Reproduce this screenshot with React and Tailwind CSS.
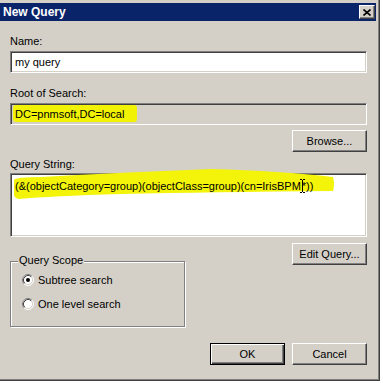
export default function App() {
  const raised =
    "border border-t-white border-l-white border-r-[#404040] border-b-[#404040] shadow-[inset_-1px_-1px_0_#808080] bg-[#d4d0c8] flex items-center justify-center";
  const sunken =
    "border border-t-[#808080] border-l-[#808080] border-r-white border-b-white shadow-[inset_1px_1px_0_#404040,inset_-1px_-1px_0_#d4d0c8]";

  const Radio = ({ checked }) => (
    <svg width="12" height="12" viewBox="0 0 12 12" className="shrink-0">
      <circle cx="6" cy="6" r="5" fill="#fff" />
      <path d="M2.11 9.89 A5.5 5.5 0 0 1 9.89 2.11" stroke="#808080" strokeWidth="1" fill="none" />
      <path d="M9.89 2.11 A5.5 5.5 0 0 1 2.11 9.89" stroke="#ffffff" strokeWidth="1" fill="none" />
      <path d="M2.82 9.18 A4.5 4.5 0 0 1 9.18 2.82" stroke="#404040" strokeWidth="1" fill="none" />
      <path d="M9.18 2.82 A4.5 4.5 0 0 1 2.82 9.18" stroke="#d4d0c8" strokeWidth="1" fill="none" />
      {checked && <circle cx="6" cy="6" r="2" fill="#000" />}
    </svg>
  );

  return (
    <div className="w-[383px] h-[383px] bg-white overflow-hidden font-['Liberation_Sans',Arial,sans-serif] text-[11px] text-black">
      <div className="w-[380px] h-[381px] bg-[#d4d0c8] border-r border-b border-r-[#404040] border-b-[#404040] shadow-[inset_-1px_-1px_0_#808080] pt-[3px] flex flex-col">
        {/* Title bar */}
        <div className="h-[18px] mr-[3px] bg-[#0a246a] flex items-center justify-between">
          <span className="pl-[3px] text-white font-bold text-[12px] leading-[18px]">New Query</span>
          <div className={`${raised} w-[16px] h-[14px] mr-[1px]`}>
            <svg width="8" height="7" viewBox="0 0 8 7">
              <path d="M0.5 0.5 L7.5 6.5 M7.5 0.5 L0.5 6.5" stroke="#000" strokeWidth="1.6" />
            </svg>
          </div>
        </div>

        {/* Body */}
        <div className="flex flex-col pl-[10px] pr-[12px]">
          <div className="mt-[14px] h-[13px] leading-[13px]">Name:</div>
          <div className={`${sunken} mt-[3px] h-[22px] bg-white flex items-center pl-[4px]`}>
            <span className="leading-[13px]">my query</span>
          </div>

          <div className="mt-[14px] h-[13px] leading-[13px]">Root of Search:</div>
          <div className={`${sunken} relative mt-[3px] h-[22px] bg-[#d4d0c8] flex items-center pl-[4px]`}>
            <span className="absolute left-[2px] top-[1px] w-[124px] h-[17px] bg-[#f2f205] rounded-[3px]" />
            <span className="relative leading-[13px]">DC=pnmsoft,DC=local</span>
          </div>

          <div className={`${raised} self-end mt-[5px] w-[75px] h-[22px]`}>Browse...</div>

          <div className="mt-[6px] h-[13px] leading-[13px]">Query String:</div>
          <div className={`${sunken} relative mt-[2px] h-[64px] bg-white pl-[4px] pt-[4px]`}>
            <svg className="absolute left-0 top-0 overflow-visible" width="1" height="1">
              <path
                d="M3 6 Q4 3 30 3 Q120 -2 200 -5 Q270 -3 322 3 Q324 10 322 17 Q200 18 110 20 Q40 22 8 25 Q2 24 3 18 Z"
                fill="#f4f40a"
              />
            </svg>
            <span className="relative leading-[13px] whitespace-nowrap">
              (&amp;(objectCategory=group)(objectClass=group)(cn=IrisBPM
              <span className="relative inline-block w-[1px] h-[1px]">
                <svg className="absolute left-[-1px] top-[-10px]" width="5" height="14" viewBox="0 0 5 14">
                  <path d="M0 0.5 H2 M3 0.5 H5 M2.5 1 V13 M0 13.5 H2 M3 13.5 H5" stroke="#000" strokeWidth="1" />
                </svg>
              </span>
              *))
            </span>
          </div>

          <div className="mt-[6px] flex items-start justify-between">
            <div className="relative mt-[18px] w-[175px] h-[66px] border border-[#808080] shadow-[inset_1px_1px_0_#fff,1px_1px_0_#fff] pl-[11px] pt-[12px] flex flex-col gap-[12px]">
              <span className="absolute left-[7px] top-[-8px] px-[1px] bg-[#d4d0c8] leading-[13px]">Query Scope</span>
              <div className="flex items-center gap-[4px] h-[12px]">
                <Radio checked />
                <span className="leading-[13px]">Subtree search</span>
              </div>
              <div className="flex items-center gap-[4px] h-[12px]">
                <Radio />
                <span className="leading-[13px]">One level search</span>
              </div>
            </div>
            <div className={`${raised} w-[75px] h-[22px]`}>Edit Query...</div>
          </div>

          <div className="mt-[16px] flex justify-end gap-[7px]">
            <div className="w-[75px] h-[22px] border border-black bg-[#d4d0c8] shadow-[inset_1px_1px_0_#fff,inset_-1px_-1px_0_#404040,inset_-2px_-2px_0_#808080] flex items-center justify-center">
              OK
            </div>
            <div className={`${raised} w-[75px] h-[22px]`}>Cancel</div>
          </div>
        </div>
      </div>
    </div>
  );
}
